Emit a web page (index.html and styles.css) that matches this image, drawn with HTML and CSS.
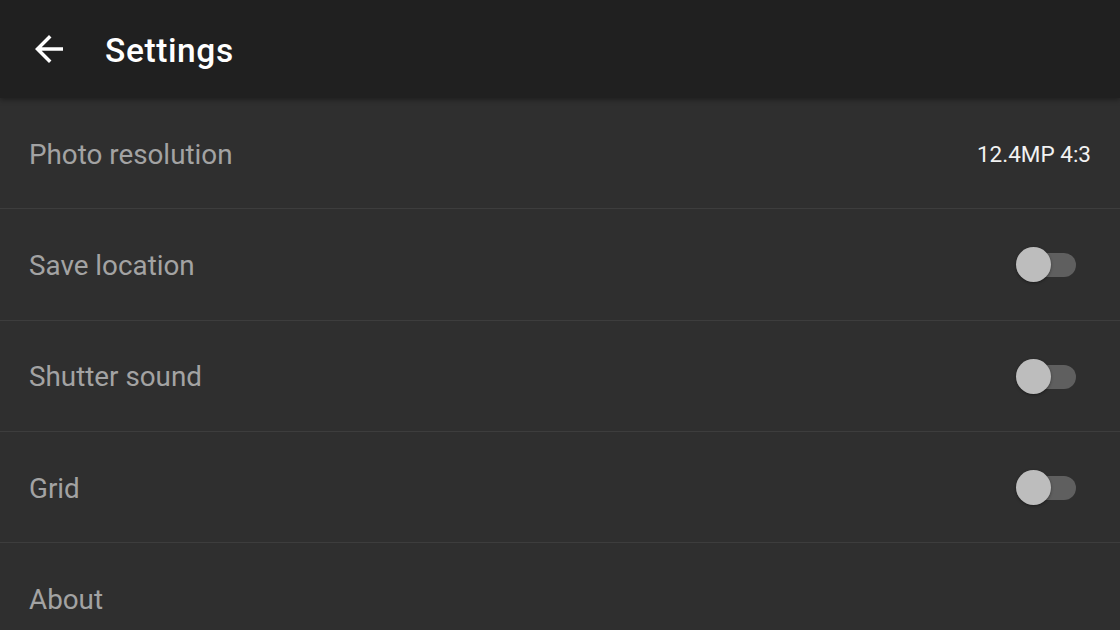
FILE: index.html
```html
<!DOCTYPE html>
<html>
<head>
<meta charset="utf-8">
<link rel="stylesheet" href="styles.css">
</head>
<body>
<div class="app">
  <header class="appbar">
    <svg class="back" viewBox="0 0 24 24" width="42" height="42"><path fill="#ffffff" d="M20 11H7.83l5.59-5.59L12 4l-8 8 8 8 1.41-1.41L7.83 13H20v-2z"/></svg>
    <h1 class="title">Settings</h1>
  </header>
  <main class="list">
    <div class="row">
      <span class="label">Photo resolution</span>
      <span class="value">12.4MP 4:3</span>
    </div>
    <div class="row">
      <span class="label">Save location</span>
      <span class="switch"><span class="track"></span><span class="thumb"></span></span>
    </div>
    <div class="row">
      <span class="label">Shutter sound</span>
      <span class="switch"><span class="track"></span><span class="thumb"></span></span>
    </div>
    <div class="row">
      <span class="label">Grid</span>
      <span class="switch"><span class="track"></span><span class="thumb"></span></span>
    </div>
    <div class="row last">
      <span class="label">About</span>
    </div>
  </main>
</div>
</body>
</html>
```

FILE: styles.css
```css
* { box-sizing: border-box; }
html, body { margin: 0; padding: 0; }
body {
  width: 1120px;
  height: 630px;
  overflow: hidden;
  background: #2f2f2f;
  font-family: Roboto, "Noto Sans", sans-serif;
}
.app { display: flex; flex-direction: column; height: 630px; }
.appbar {
  height: 98px;
  background: #202020;
  display: flex;
  align-items: center;
  padding-left: 28px;
  box-shadow: 0 2px 5px rgba(0,0,0,0.35);
  position: relative;
  z-index: 1;
  flex: none;
}
.back { display: block; flex: none; }
.title {
  margin: 2px 0 0 35px;
  font-size: 33.5px;
  font-weight: 500;
  color: #ffffff;
  letter-spacing: 0.6px;
}
.list { display: flex; flex-direction: column; }
.row {
  height: 111.3px;
  display: flex;
  align-items: center;
  justify-content: space-between;
  padding: 0 29px;
  border-bottom: 1px solid #3d3d3d;
  flex: none;
}
.row.last { border-bottom: none; }
.label {
  font-size: 27.8px;
  color: #a3a3a3;
  padding-top: 2px;
}
.value {
  font-size: 22.5px;
  color: #f2f2f2;
  padding-top: 2px;
}
.switch {
  position: relative;
  width: 60px;
  height: 36px;
  margin-right: 15px;
  margin-top: 2px;
  display: block;
}
.track {
  position: absolute;
  left: 6px;
  right: 0;
  top: 6px;
  height: 24px;
  border-radius: 12px;
  background: #5f5f5f;
}
.thumb {
  position: absolute;
  left: 0;
  top: 0;
  width: 35px;
  height: 35px;
  border-radius: 50%;
  background: #bdbdbd;
  box-shadow: 0 1px 3px rgba(0,0,0,0.4);
}
```
